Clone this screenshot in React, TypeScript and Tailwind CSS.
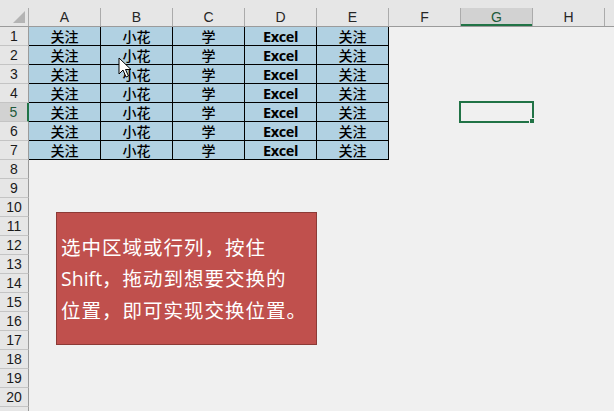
import React from "react";

const COLS = ["A", "B", "C", "D", "E", "F", "G", "H"];
const ROWS = Array.from({ length: 20 }, (_, i) => i + 1);
const DATA = ["关注", "小花", "学", "Excel", "关注"];

const sans = "font-['Liberation_Sans','Noto_Sans_CJK_SC',sans-serif]";
const cjk = "font-['Noto_Sans_CJK_SC',sans-serif]";

function ColumnHeader() {
  return (
    <div className="flex h-[27px] shrink-0 border-b border-[#9b9b9b] bg-[#e6e6e6] pt-[8px]">
      <div className="flex w-[29px] shrink-0 items-end justify-end border-r border-[#ababab] pb-[3px] pr-[3px]">
        <svg width="12" height="12" viewBox="0 0 12 12">
          <polygon points="12,0 12,12 0,12" fill="#b4b4b4" />
        </svg>
      </div>
      {COLS.map((c) => (
        <div
          key={c}
          className={`flex w-[72px] shrink-0 items-center justify-center border-r border-[#ababab] text-[14px] ${
            c === "G" ? "bg-[#d2d2d2] text-[#1e5a3a] shadow-[inset_0_-2px_0_#217346]" : "text-[#262626]"
          }`}
        >
          {c}
        </div>
      ))}
      <div className="flex-1" />
    </div>
  );
}

function Row({ n }: { n: number }) {
  const inTable = n <= 7;
  const selected = n === 5;
  return (
    <div className="flex h-[19px] shrink-0">
      <div
        className={`flex w-[29px] shrink-0 items-center justify-center border-b border-r border-b-[#c4c4c4] text-[14px] ${
          selected
            ? "border-r-[#217346] border-r-2 bg-[#d2d2d2] text-[#1e5a3a]"
            : "border-r-[#9b9b9b] bg-[#e6e6e6] text-[#1a1a1a]"
        }`}
      >
        {n}
      </div>
      {inTable &&
        DATA.map((v, i) => (
          <div
            key={i}
            className={`flex w-[72px] shrink-0 items-center justify-center border-b border-r border-black bg-[#b1d1e2] text-black ${
              v === "Excel"
                ? "pt-[2px] font-['Open_Sans',sans-serif] text-[14.5px] font-bold tracking-[-0.4px]"
                : `${cjk} text-[14px] font-medium`
            }`}
          >
            {v}
          </div>
        ))}
    </div>
  );
}

export default function App() {
  return (
    <div className={`relative flex h-[411px] w-[614px] flex-col overflow-hidden bg-[#f0f0f0] ${sans}`}>
      <ColumnHeader />
      {ROWS.map((n) => (
        <Row key={n} n={n} />
      ))}
      <div className="flex flex-1">
        <div className="w-[29px] border-r border-[#9b9b9b] bg-[#e6e6e6]" />
      </div>

      <div className="absolute left-[459px] top-[101px] h-[22px] w-[75px] border-2 border-[#217346]">
        <div className="absolute -bottom-[3px] -right-[3px] h-[6px] w-[6px] border border-[#f0f0f0] bg-[#217346]" />
      </div>

      <div
        className={`absolute left-[56px] top-[212px] h-[133px] w-[261px] border border-[#8c3a36] bg-[#c0504d] pl-[4px] pt-[18px] text-[19.5px] leading-[31px] tracking-[1px] text-white ${cjk}`}
      >
        <div>选中区域或行列，按住</div>
        <div>
          <span className="font-['Open_Sans',sans-serif] tracking-normal">Shift</span>，拖动到想要交换的
        </div>
        <div>位置，即可实现交换位置。</div>
      </div>

      <svg className="absolute left-[118px] top-[57px]" width="14" height="22" viewBox="0 0 14 22">
        <path
          d="M1 1 L1 17 L5 13 L8 20 L10.5 19 L7.5 12.5 L13 12.5 Z"
          fill="white"
          stroke="black"
          strokeWidth="1"
          strokeLinejoin="miter"
        />
      </svg>
    </div>
  );
}
